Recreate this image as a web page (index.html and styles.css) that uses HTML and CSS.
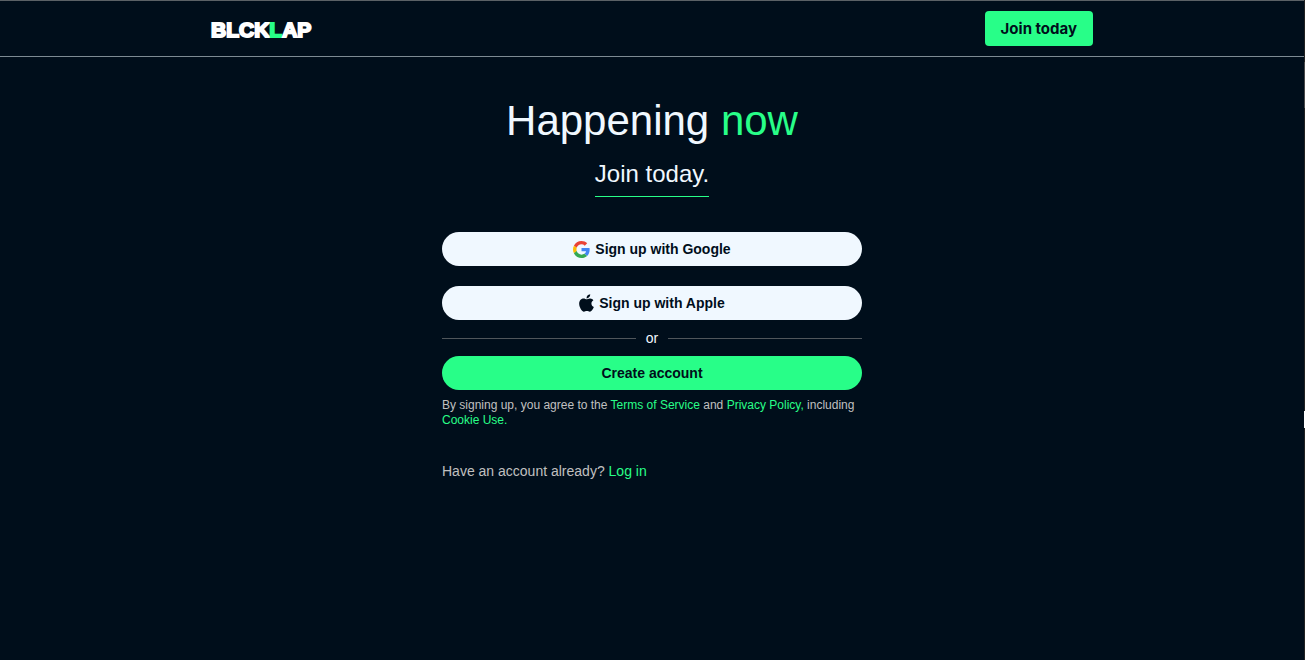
FILE: index.html
```html
<!DOCTYPE html>
<html lang="en">
<head>
<meta charset="utf-8">
<meta name="viewport" content="width=device-width, initial-scale=1">
<title>BLCKLAP</title>
<link rel="stylesheet" href="styles.css">
</head>
<body>
<header class="topbar">
  <div class="topbar-inner">
    <a class="logo" href="#">BLCK<span class="accent">L</span>AP</a>
    <button class="join" type="button">Join today</button>
  </div>
</header>
<main class="signup">
  <h1 class="title">Happening <span class="accent">now</span></h1>
  <h2 class="subtitle">Join today.</h2>
  <div class="actions">
    <button class="pill pill-light" type="button">
      <svg class="icon" viewBox="0 0 48 48" aria-hidden="true">
        <path fill="#EA4335" d="M24 9.5c3.54 0 6.71 1.22 9.21 3.6l6.85-6.85C35.9 2.38 30.47 0 24 0 14.62 0 6.51 5.38 2.56 13.22l7.98 6.19C12.43 13.72 17.74 9.5 24 9.5z"/>
        <path fill="#4285F4" d="M46.98 24.55c0-1.57-.15-3.09-.38-4.55H24v9.02h12.94c-.58 2.96-2.26 5.48-4.78 7.18l7.73 6c4.51-4.18 7.09-10.36 7.09-17.65z"/>
        <path fill="#FBBC05" d="M10.53 28.59c-.48-1.45-.76-2.99-.76-4.59s.27-3.14.76-4.59l-7.98-6.19C.92 16.46 0 20.12 0 24s.92 7.54 2.56 10.78z"/>
        <path fill="#34A853" d="M24 48c6.48 0 11.93-2.13 15.89-5.81l-7.73-6c-2.15 1.45-4.92 2.3-8.16 2.3-6.26 0-11.57-4.22-13.47-9.91l-7.98 6.19C6.51 42.62 14.62 48 24 48z"/>
      </svg>
      <span>Sign up with Google</span>
    </button>
    <button class="pill pill-light" type="button">
      <svg class="icon icon-apple" viewBox="0 0 384 512" aria-hidden="true">
        <path fill="currentColor" d="M318.7 268.7c-.2-36.7 16.4-64.4 50-84.8-18.8-26.9-47.2-41.7-84.7-44.6-35.5-2.800-74.300 20.700-88.500 20.700-15 0-49.400-19.700-76.400-19.700C63.300 141.200 4 184.800 4 273.500q0 39.300 14.400 81.200c12.800 36.700 59 126.700 107.200 125.200 25.200-.6 43-17.900 75.800-17.900 31.800 0 48.300 17.900 76.400 17.900 48.600-.7 90.400-82.500 102.600-119.300-65.200-30.700-61.700-90-61.700-91.900zm-56.600-164.200c27.300-32.400 24.800-61.900 24-72.500-24.100 1.400-52 16.400-67.900 34.900-17.500 19.800-27.800 44.300-25.600 71.900 26.100 2 49.900-11.400 69.500-34.300z"/>
      </svg>
      <span>Sign up with Apple</span>
    </button>
  </div>
  <div class="divider"><span>or</span></div>
  <button class="pill pill-green" type="button">Create account</button>
  <p class="terms">By signing up, you agree to the <a href="#">Terms of Service</a> and <a href="#">Privacy Policy,</a> including <a href="#">Cookie Use.</a></p>
  <p class="login">Have an account already? <a href="#">Log in</a></p>
</main>
<div class="edge" aria-hidden="true"><i class="edge-thumb"></i><i class="edge-mark"></i></div>
</body>
</html>
```
FILE: styles.css
```css
* { box-sizing: border-box; }

body {
  margin: 0;
  padding-right: 1px;
  min-height: 100vh;
  background: #000e1b;
  color: #f0f8ff;
  font-family: "Liberation Sans", Arial, sans-serif;
}

a { color: #28fe88; text-decoration: none; }
button { border: 0; cursor: pointer; font-family: inherit; color: #000e1b; }
.accent { color: #28fe88; }

.topbar {
  border-top: 1px solid #5b6166;
  border-bottom: 1px solid #7d8a93;
}
.topbar-inner {
  display: flex;
  align-items: center;
  justify-content: space-between;
  width: 68%;
  max-width: 882px;
  height: 55px;
  margin: 0 auto;
}
.logo {
  padding-top: 2px;
  color: #fff;
  font-size: 21px;
  font-weight: 700;
  -webkit-text-stroke: 2px;
}
.join {
  height: 35px;
  padding: 0 16px;
  border-radius: 4px;
  background: #28fe88;
  font-family: Inter, "Liberation Sans", sans-serif;
  font-size: 15px;
  font-weight: 700;
}

.signup {
  display: flex;
  flex-direction: column;
  align-items: center;
  width: 100%;
  max-width: 420px;
  margin: 0 auto;
  padding-top: 40px;
}
.title {
  margin: 0;
  font-size: 42px;
  line-height: 48px;
  font-weight: 400;
}
.subtitle {
  margin: 14px 0 35px;
  padding-bottom: 7px;
  border-bottom: 1px solid #28fe88;
  font-size: 24px;
  line-height: 30px;
  font-weight: 400;
}
.actions {
  display: flex;
  flex-direction: column;
  gap: 20px;
  width: 100%;
}
.pill {
  display: flex;
  align-items: center;
  justify-content: center;
  gap: 5px;
  width: 100%;
  height: 34px;
  border-radius: 17px;
  font-size: 14px;
  font-weight: 700;
}
.pill-light { background: #f0f8ff; }
.pill-green { background: #28fe88; }
.icon { width: 17px; height: 17px; }
.icon-apple { width: 15px; height: 20px; }

.divider {
  display: flex;
  align-items: center;
  gap: 10px;
  width: 100%;
  height: 36px;
  font-size: 14px;
}
.divider::before,
.divider::after {
  content: "";
  flex: 1;
  height: 1px;
  background: #50565b;
}
.terms {
  width: 100%;
  margin: 8px 0 0;
  color: #c0c0c0;
  font-size: 12px;
  line-height: 15px;
}
.login {
  width: 100%;
  margin: 35px 0 0;
  color: #c0c0c0;
  font-size: 14px;
  line-height: 17px;
}

.edge {
  position: absolute;
  top: 0;
  right: 0;
  bottom: 0;
  width: 1px;
  background: #222;
}
.edge-thumb,
.edge-mark {
  position: absolute;
  width: 1px;
}
.edge-thumb { top: 62px; height: 46px; background: #4a4a4a; }
.edge-mark { top: 411px; height: 17px; background: #fff; }
```
